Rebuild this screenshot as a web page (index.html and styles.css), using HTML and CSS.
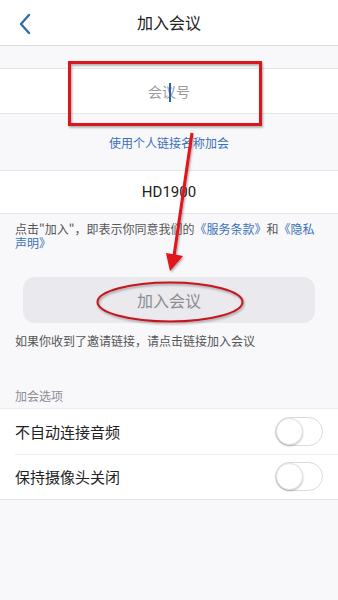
FILE: index.html
```html
<!DOCTYPE html>
<html lang="zh">
<head>
<meta charset="utf-8">
<link rel="stylesheet" href="styles.css">
</head>
<body>
<div class="page">
  <header class="nav">
    <span class="back">
      <svg width="14" height="22" viewBox="0 0 14 22"><path d="M11 2 L3 11 L11 20" fill="none" stroke="#2f6db5" stroke-width="2.4" stroke-linecap="round" stroke-linejoin="round"/></svg>
    </span>
    <span class="title">加入会议</span>
  </header>
  <div class="gap"></div>
  <div class="field"><span class="ph">会议号</span><span class="cursor"></span></div>
  <div class="linkrow"><span class="link">使用个人链接名称加会</span></div>
  <div class="name">HD1900</div>
  <div class="terms">
    <div class="tline">点击"加入"，即表示你同意我们的<span class="link">《服务条款》</span>和<span class="link">《隐私</span></div>
    <div class="tline"><span class="link">声明》</span></div>
  </div>
  <div class="btnwrap"><div class="btn">加入会议</div></div>
  <p class="tip">如果你收到了邀请链接，请点击链接加入会议</p>
  <div class="section">加会选项</div>
  <div class="list">
    <div class="row"><span>不自动连接音频</span><span class="toggle"><span class="knob"></span></span></div>
    <div class="row"><span>保持摄像头关闭</span><span class="toggle"><span class="knob"></span></span></div>
  </div>
  <svg class="annot" width="338" height="600" viewBox="0 0 338 600">
    <defs>
      <filter id="sh" x="-10%" y="-10%" width="120%" height="120%"><feDropShadow dx="1" dy="1.5" stdDeviation="1.2" flood-color="#000" flood-opacity="0.35"/></filter>
    </defs>
    <rect x="69.5" y="62.5" width="191" height="62" fill="none" stroke="#d8121a" stroke-width="3" filter="url(#sh)"/>
    <line x1="192" y1="133" x2="174" y2="256" stroke="#e0121a" stroke-width="3" filter="url(#sh)"/>
    <polygon points="166,253 183,256 170,271" fill="#e0121a" filter="url(#sh)"/>
    <ellipse cx="170" cy="302" rx="72.5" ry="19.5" fill="none" stroke="#c4161c" stroke-width="2" filter="url(#sh)"/>
  </svg>
</div>
</body>
</html>
```
FILE: styles.css
```css
* { box-sizing: border-box; margin: 0; padding: 0; }
html, body { width: 338px; height: 600px; overflow: hidden; }
body { font-family: "Noto Sans CJK SC", "Noto Sans", sans-serif; background: #f8f8fa; color: #222; }
.page { position: relative; width: 338px; height: 600px; background: #f8f8fa; }
.nav { height: 46px; background: #fff; border-bottom: 1px solid #dcdcdf; display: flex; align-items: center; justify-content: center; position: relative; }
.back { position: absolute; left: 18px; top: 13px; display: flex; }
.title { font-size: 16px; color: #222; line-height: 20px; margin-top: -2px; }
.gap { height: 22px; }
.field { height: 46px; background: #fff; border-top: 1px solid #e6e6e9; border-bottom: 1px solid #e6e6e9; display: flex; align-items: center; justify-content: center; position: relative; }
.ph { font-size: 14px; color: #9a9a9e; }
.cursor { position: absolute; left: 169px; top: 14px; width: 2px; height: 19px; background: #2c62b4; }
.linkrow { height: 56px; display: flex; align-items: center; justify-content: center; }
.link { color: #3a70b8; }
.linkrow .link { font-size: 12px; }
.name { height: 44px; background: #fff; border-top: 1px solid #e6e6e9; border-bottom: 1px solid #e6e6e9; display: flex; align-items: center; justify-content: center; font-family: "Roboto", "Noto Sans", sans-serif; font-size: 15px; color: #222; }
.terms { padding: 8px 15px 0; height: 63px; display: flex; flex-direction: column; color: #555; }
.tline { font-size: 12px; line-height: 14px; height: 14px; white-space: nowrap; }
.btnwrap { padding: 0 23px; }
.btn { height: 46px; border-radius: 12px; background: #e9e9ee; display: flex; align-items: center; justify-content: center; font-size: 16px; color: #8d8d92; }
.tip { padding: 10px 15px 0; font-size: 12px; line-height: 15px; color: #555; }
.section { padding: 41px 15px 0; font-size: 12px; line-height: 14px; color: #8d8d92; height: 60px; }
.list { background: #fff; border-top: 1px solid #ececef; border-bottom: 1px solid #e6e6e9; }
.row { height: 45px; display: flex; align-items: center; justify-content: space-between; padding: 0 15px; font-size: 15px; color: #222; position: relative; }
.row + .row::before { content: ""; position: absolute; left: 15px; right: 0; top: 0; border-top: 1px solid #ececef; }
.toggle { width: 48px; height: 29px; border-radius: 15px; border: 1px solid #dadadc; background: #fff; position: relative; }
.knob { position: absolute; left: 0; top: 0; width: 27px; height: 27px; border-radius: 50%; background: #fff; box-shadow: 0 1px 2px rgba(0,0,0,0.25); border: 1px solid #e2e2e4; }
.annot { position: absolute; left: 0; top: 0; pointer-events: none; }
```
